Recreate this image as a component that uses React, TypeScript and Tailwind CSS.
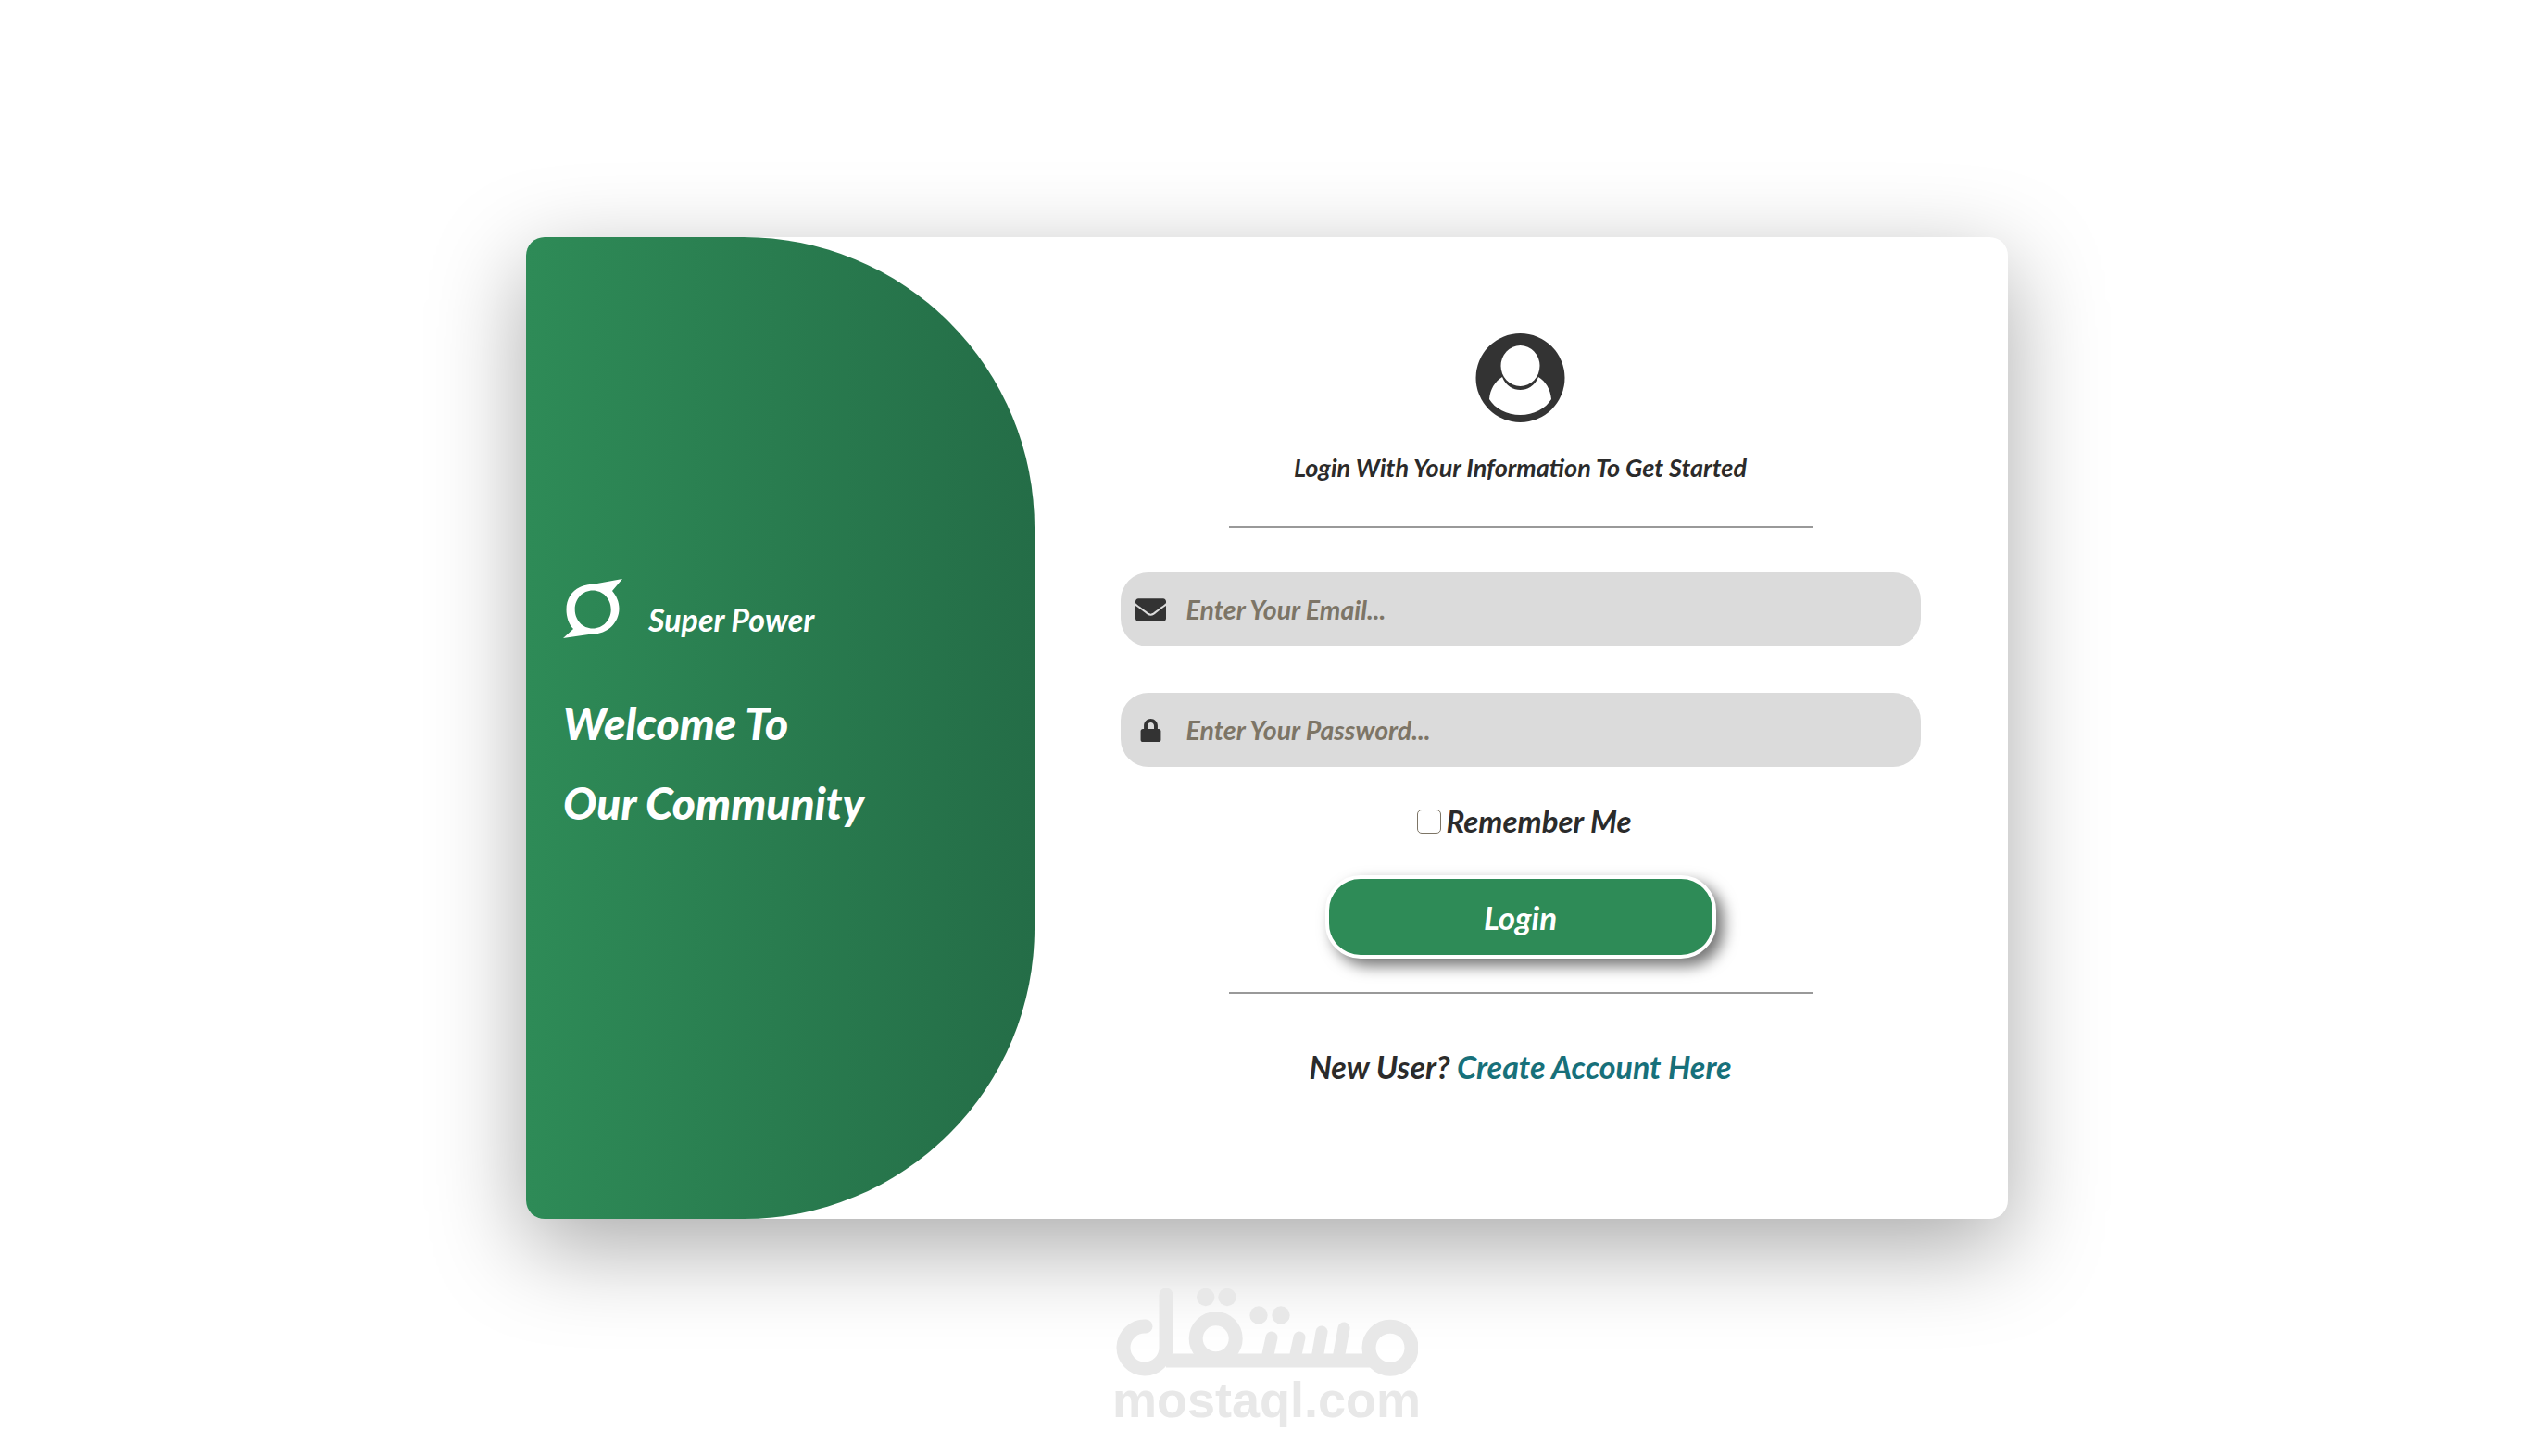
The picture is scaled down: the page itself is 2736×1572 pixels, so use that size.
import { FaEnvelope, FaLock } from 'react-icons/fa'

function BrandMark() {
  return (
    <svg className="w-16 h-16 shrink-0" viewBox="0 0 64 64" fill="#fff">
      <path
        fillRule="evenodd"
        d="M18 9 C24 6 30 6 34 5.5 L64 0 L53 13 C58 19 60.5 25 60.5 32 C60.5 48 47 60 31 59.5 L0 64 L11 54 C6 49 3.5 41 3.5 33 C3.5 22 9 13 18 9 Z M32 12.5 C21 12.5 12.7 21.5 12.7 33 C12.7 44.5 21 53.5 32 53.5 C43 53.5 51.7 44.5 51.7 33 C51.7 21.5 43 12.5 32 12.5 Z"
      />
    </svg>
  )
}

function UserAvatar() {
  return (
    <svg className="w-[97px] h-[96px]" viewBox="0 0 97 96">
      <circle cx="48.5" cy="48" r="48" fill="#333333" />
      <ellipse cx="48.5" cy="35" rx="21" ry="22" fill="#fff" />
      <path
        d="M29 47 C33 57 41 61 48.5 61 C56 61 64 57 68 47 C76 52 81 60 82 71 C76 81 63 88 48.5 88 C34 88 21 81 15 71 C16 60 21 52 29 47 Z"
        fill="#fff"
      />
    </svg>
  )
}

function WatermarkLogo() {
  return (
    <svg className="w-[327px] h-[95px]" viewBox="0 0 327 95" fill="none" stroke="#e8e8e8" strokeWidth="15" strokeLinecap="round">
      <path d="M33 41 A23 23 0 1 0 55 64 L55 7" />
      <circle cx="108.7" cy="54.3" r="21.5" />
      <path d="M55 78 L276 78" strokeLinecap="butt" />
      <circle cx="297" cy="64.3" r="23" />
      <path d="M169 53 L164 76 M199 53 L194 76 M223 47 L218 76 M247 43 L241 76" strokeWidth="13" />
      <g fill="#e8e8e8" stroke="none">
        <circle cx="97.7" cy="9.5" r="9.7" />
        <circle cx="121" cy="9.5" r="9.7" />
        <circle cx="155" cy="29" r="9.7" />
        <circle cx="179" cy="29" r="9.7" />
      </g>
    </svg>
  )
}

export default function App() {
  return (
    <div className="relative h-[1572px] bg-white pt-[256px] flex justify-center [font-family:Lato,sans-serif] italic overflow-hidden">
      <div className="w-[1600px] h-[1060px] flex bg-white rounded-[20px] shadow-[0_30px_100px_rgba(0,0,0,0.34)]">
        {/* Green side panel */}
        <div className="w-[549px] h-full flex flex-col pt-[369px] pl-10 text-white bg-gradient-to-r from-[#2e8b57] to-[#246d47] rounded-l-[20px] rounded-r-[314px]">
          <div className="flex items-end gap-7 mb-[49px]">
            <BrandMark />
            <span className="text-[34px] leading-[40px] font-bold">Super Power</span>
          </div>
          <h1 className="text-[48px] leading-[86px] font-black">
            Welcome To
            <br />
            Our Community
          </h1>
        </div>

        {/* Login form */}
        <div className="flex-1 flex flex-col items-center pt-[104px] pr-[2px] text-[#2b2b2b]">
          <UserAvatar />
          <p className="mt-[34px] text-[27px] leading-[30px] font-bold">Login With Your Information To Get Started</p>
          <div className="mt-[48px] w-[630px] h-[2px] bg-[#999999]" />

          <label className="mt-[48px] w-[864px] h-20 flex items-center gap-[22px] pl-4 bg-[#dbdbdb] rounded-[30px]">
            <FaEnvelope className="w-[33px] h-[33px] text-[#333333]" />
            <input
              type="email"
              placeholder="Enter Your Email..."
              className="flex-1 bg-transparent outline-none text-[28.5px] italic font-bold placeholder:text-[#7d7566]"
            />
          </label>
          <label className="mt-[50px] w-[864px] h-20 flex items-center gap-[22px] pl-4 bg-[#dbdbdb] rounded-[30px]">
            <FaLock className="w-[33px] h-[25px] text-[#333333]" />
            <input
              type="password"
              placeholder="Enter Your Password..."
              className="flex-1 bg-transparent outline-none text-[28.5px] italic font-bold placeholder:text-[#7d7566]"
            />
          </label>

          <label className="mt-[44px] ml-[8px] h-[30px] flex items-center gap-[6px] text-[33px] font-bold">
            <span className="w-[26px] h-[26px] bg-white border border-[#7d7566] rounded-[5px]" />
            Remember Me
          </label>

          <button className="mt-[43px] w-[422px] h-[90px] bg-[#2e8b57] border-4 border-white rounded-[38px] text-white text-[35px] italic font-bold shadow-[8px_8px_16px_rgba(0,0,0,0.55)]">
            Login
          </button>
          <div className="mt-[36px] w-[630px] h-[2px] bg-[#999999]" />

          <p className="mt-[62px] text-[34px] leading-[34px] font-bold">
            New User? <a className="text-[#17707a]">Create Account Here</a>
          </p>
        </div>
      </div>

      {/* Site watermark */}
      <div className="absolute top-[1391px] left-[1204px] w-[327px] flex flex-col items-center">
        <WatermarkLogo />
        <span className="[font-family:'Liberation_Sans',sans-serif] not-italic font-bold text-[54px] leading-[50px] text-[#e8e8e8]">mostaql.com</span>
      </div>
    </div>
  )
}
